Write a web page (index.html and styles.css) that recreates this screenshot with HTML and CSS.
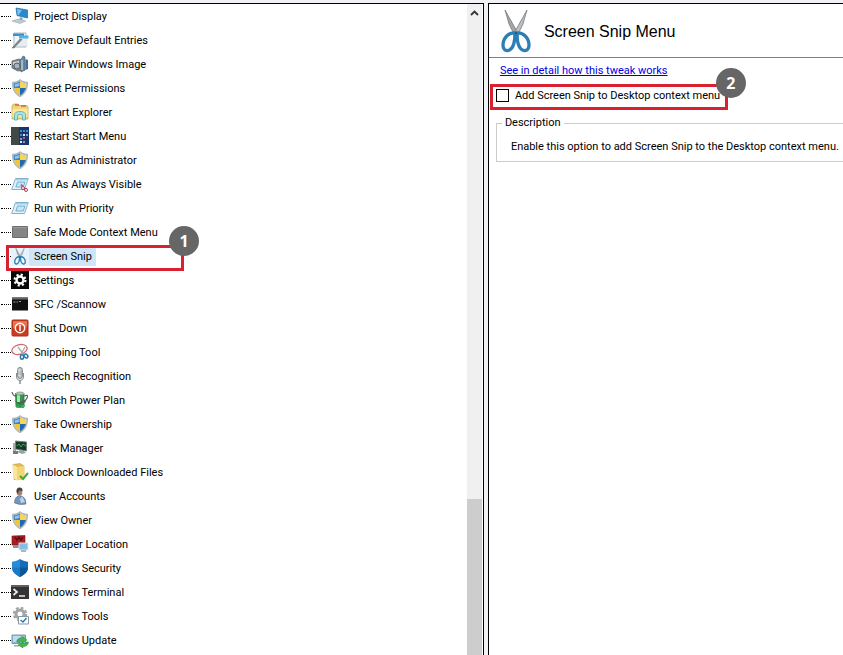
FILE: index.html
```
<!DOCTYPE html>
<html lang="en">
<head>
	<meta charset="UTF-8">
	<title>Screen Snip Menu</title>
	<link rel="stylesheet" href="styles.css">
</head>
<body>
	<svg class="defs" aria-hidden="true">
		<symbol id="shield" viewBox="0 0 18 18">
			<path d="M9 .5C7 2.500 4 3.200 1.500 3.200C1.300 10 3.500 15 9 17.700C14.500 15 16.700 10 16.500 3.200C14 3.200 11 2.500 9 .5Z" fill="#b9c4ca" stroke="#8d9aa2" stroke-width=".6"/>
			<path d="M9 2C7.500 3.600 5 4.300 2.700 4.300C2.600 6.500 2.800 8 3.200 9H9Z" fill="#3583ce"/>
			<path d="M9 2C10.500 3.600 13 4.300 15.300 4.300C15.400 6.500 15.200 8 14.800 9H9Z" fill="#f8d552"/>
			<path d="M3.200 9C4.200 12.500 6.300 15 9 16.500V9Z" fill="#f3c63a"/>
			<path d="M14.800 9C13.800 12.500 11.700 15 9 16.500V9Z" fill="#2469ae"/>
			<path d="M3.700 5.200C5.500 5 7.200 4.500 8.500 3.700V6.700C7 7.400 5.500 7.800 3.900 7.900Z" fill="#8fc3ed"/>
		</symbol>
		<symbol id="run" viewBox="0 0 18 18">
			<path d="M4.500 3.500H17.300L13.500 14.500H.7Z" fill="#e4f3fb" stroke="#7fb2cf"/>
			<path d="M5 4H16.500L16 5.500H4.500Z" fill="#9fd0ea"/>
			<path d="M6.500 7H14L12.300 12H4.800Z" fill="#c5e5f6" stroke="#5d9ec4" stroke-width=".8"/>
		</symbol>
		<symbol id="scissors" viewBox="0 0 30 44">
			<path d="M4 1L18 26L14.500 27Q10 20 8 15Z" fill="#a3a7aa" stroke="#6c7073" stroke-width=".7"/>
			<path d="M26 1L12 26L15.500 27Q20 20 22 15Z" fill="#bcc0c2" stroke="#6c7073" stroke-width=".7"/>
			<path d="M14 24C8 23 2 29 2 36C2 40 4 42 7 41.500C12 40.500 14 33 14 24Z" fill="#fff" fill-opacity=".4" stroke="#2b7fb5" stroke-width="3.300"/>
			<path d="M16 24C22 23 28 29 28 36C28 40 26 42 23 41.500C18 40.500 16 33 16 24Z" fill="#fff" fill-opacity=".4" stroke="#2b7fb5" stroke-width="3.300"/>
			<circle cx="15" cy="24" r="1" fill="#17557e"/>
		</symbol>
	</svg>

	<div class="panes">
		<nav class="tree" aria-label="Tweaks">
			<ul class="items">
				<li><a href="#"><svg class="icon" viewBox="0 0 18 18"><path d="M5 1L16.500 3V11L6 8.500Z" fill="#2689cf" stroke="#1d6ba5" stroke-width=".7"/><path d="M6 2L11 3L7.500 8.200L6.700 8Z" fill="#77c2ef"/><path d="M9 10L12 11L11 14H8Z" fill="#91a8b5"/><path d="M1 14L7 12L15 14L9 16.500Z" fill="#bdccd5" stroke="#8e9fa9" stroke-width=".5"/></svg><span>Project Display</span></a></li>
				<li><a href="#"><svg class="icon" viewBox="0 0 18 18"><path d="M3 2H15V16H3Z" fill="#f3f6f8" stroke="#a8b8c3"/><path d="M2 2.500H13V5H2Z" fill="#3a91c9"/><path d="M8 4.500H17.500V7.500H8Z" fill="#53b3df"/><path d="M8 8H16.500V15H6Z" fill="#e6edf1"/><path d="M1 17L9 8L11 8.500L3 17Z" fill="#84898c" stroke="#575e62" stroke-width=".5"/></svg><span>Remove Default Entries</span></a></li>
				<li><a href="#"><svg class="icon" viewBox="0 0 18 18"><path d="M1 6L8 4L14 6V15L7 16L1 13Z" fill="#7e8b94" stroke="#4f5b64" stroke-width=".7"/><path d="M2 7L8 6V9L2 10Z" fill="#c7d1d7"/><circle cx="6" cy="11" r="3" fill="#a8b4bc" stroke="#55626b"/><path d="M9 6L12 1L14 2V15L10 17Z" fill="#6c899d" stroke="#465a68" stroke-width=".6"/><path d="M14.500 4L17 5V14L14.500 15Z" fill="#3c6f9c"/><path d="M11 5V15" stroke="#dce7ee"/></svg><span>Repair Windows Image</span></a></li>
				<li><a href="#"><svg class="icon"><use href="#shield"/></svg><span>Reset Permissions</span></a></li>
				<li><a href="#"><svg class="icon" viewBox="0 0 18 18"><path d="M1 3L2.500 1H7L8 2.500H16L17 4V16H1Z" fill="#f2d479" stroke="#bda052" stroke-width=".7"/><path d="M4 2H8M10 3H15" stroke="#cc6942" stroke-width="1.500"/><path d="M1.500 6H16.500V14H1.500Z" fill="#fae99e"/><path d="M3.500 17V12Q3.500 8.500 9 8.500T14.500 12V17H11.500V13Q11.500 11.500 9 11.500T6.500 13V17Z" fill="#a7e4e4" stroke="#4aadb2" stroke-width=".8"/></svg><span>Restart Explorer</span></a></li>
				<li><a href="#"><svg class="icon" viewBox="0 0 18 18"><path fill="#414846" d="M0 0H18V18H0Z"/><path fill="#18356b" d="M8 0H18V18H8Z"/><path d="M9 3H11V5H9ZM12 3H14V5H12ZM9 7H11V9H9ZM15 3H17V5H15Z" fill="#438ccb"/><path d="M12 7H14V9H12ZM9 14H11V16H9Z" fill="#dce8f4"/><path d="M12 10H14V12H12Z" fill="#ca4e63"/><path d="M9 11H11V13H9ZM15 7H17V9H15ZM12 14H14V16H12Z" fill="#7d9fcc"/></svg><span>Restart Start Menu</span></a></li>
				<li><a href="#"><svg class="icon"><use href="#shield"/></svg><span>Run as Administrator</span></a></li>
				<li><a href="#"><svg class="icon" viewBox="0 0 18 18"><use href="#run"/><path d="M10 9.500L14 14" stroke="#ad5365" stroke-width="1.600"/><circle cx="12" cy="13" r="1.500" fill="#fff" stroke="#aa3f56"/><circle cx="15" cy="15" r="1.500" fill="#fff" stroke="#aa3f56"/></svg><span>Run As Always Visible</span></a></li>
				<li><a href="#"><svg class="icon"><use href="#run"/></svg><span>Run with Priority</span></a></li>
				<li><a href="#"><svg class="icon" viewBox="0 0 18 18"><path d="M1.500 3.500H16.500V14.500H1.500Z" fill="#858585" stroke="#6d6d6d"/><path d="M2 4H16V5H2Z" fill="#9b9b9b"/></svg><span>Safe Mode Context Menu</span></a></li>
				<li class="selected"><a href="#" aria-current="true"><svg class="icon"><use href="#scissors"/></svg><span>Screen Snip</span></a>
					<div class="mark mark-item"><b class="step">1</b></div></li>
				<li><a href="#"><svg class="icon" viewBox="0 0 18 18"><path fill="#080808" d="M0 0H18V18H0Z"/><circle cx="9" cy="9" r="3.500" fill="none" stroke="#fff" stroke-width="2.400"/><circle cx="9" cy="9" r="5.400" fill="none" stroke="#fff" stroke-width="2.200" stroke-dasharray="2.120"/></svg><span>Settings</span></a></li>
				<li><a href="#"><svg class="icon" viewBox="0 0 18 18"><path d="M1 2.500H17V15.500H1Z" fill="#111"/><path d="M1 2.500H17V4.500H1Z" fill="#686868"/><path d="M2.500 7H4.500M5.500 7H7M8 6.500H10" stroke="#9c9c9c"/></svg><span>SFC /Scannow</span></a></li>
				<li><a href="#"><svg class="icon" viewBox="0 0 18 18"><rect x="1" y="1" width="16" height="16" rx="1" fill="#ca3d20" stroke="#a92f18"/><path d="M2 2H16V8Q8 5 2 9Z" fill="#e37457"/><circle cx="9" cy="9" r="4.700" fill="none" stroke="#fff" stroke-width="1.500"/><path d="M9 6V12" stroke="#fff" stroke-width="1.500"/></svg><span>Shut Down</span></a></li>
				<li><a href="#"><svg class="icon" viewBox="0 0 18 18"><ellipse cx="8.500" cy="6.500" rx="7.800" ry="4.800" transform="rotate(-15 8.500 6.500)" fill="#fffafa" stroke="#cc6870" stroke-width="1.200"/><path d="M7 4L13 12M14 4L10 11" stroke="#a9adb0" stroke-width="1.300"/><ellipse cx="11" cy="14" rx="1.600" ry="2.200" fill="none" stroke="#2878aa" stroke-width="1.500"/><ellipse cx="15" cy="13" rx="1.600" ry="2.200" transform="rotate(-40 15 13)" fill="none" stroke="#2878aa" stroke-width="1.500"/></svg><span>Snipping Tool</span></a></li>
				<li><a href="#"><svg class="icon" viewBox="0 0 18 18"><path d="M5.500 6V10Q5.500 13.500 9 13.500T12.500 10V6" fill="none" stroke="#8b8f91"/><path d="M9 13V17" stroke="#8b8f91" stroke-width="1.500"/><rect x="6.700" y=".5" width="4.600" height="11" rx="2.200" fill="#c6cacb" stroke="#777c7e"/><path d="M8 2V9" stroke="#f3f3f3"/><path d="M7 5H11M7 7H11" stroke="#929799" stroke-width=".6"/></svg><span>Speech Recognition</span></a></li>
				<li><a href="#"><svg class="icon" viewBox="0 0 18 18"><path d="M1 1Q2 6 7 5M13 5Q18 3 16 7T12 10" fill="none" stroke="#505f59" stroke-width="1.200"/><path d="M4.500 2.500H13V16H5Z" fill="#2e9a4d" stroke="#24683b" stroke-width=".7"/><path d="M6 3.500H9V11H6Z" fill="#a4e7a1"/><ellipse cx="9" cy="2.500" rx="4" ry="1.500" fill="#b9c9bc" stroke="#5e7864" stroke-width=".6"/><path d="M3 9.500L8 11.500L13 8.500L15 11L9 14Z" fill="#54615b"/><path d="M5 14L9 16L14 13L13 17H6Z" fill="#38b356"/></svg><span>Switch Power Plan</span></a></li>
				<li><a href="#"><svg class="icon"><use href="#shield"/></svg><span>Take Ownership</span></a></li>
				<li><a href="#"><svg class="icon" viewBox="0 0 18 18"><path d="M2 4H5V12H2Z" fill="#a2afb3"/><path d="M4.500 2L15.500 3V12L4.500 10Z" fill="#173824" stroke="#75837c"/><path d="M5.500 7L8 5L10 8L12 5L15 7" fill="none" stroke="#49a364"/><path d="M9 11L13 12L15 14L11 15L6 13Z" fill="#99a4aa"/><path d="M2 12H7V15H2Z" fill="#6d7c84"/></svg><span>Task Manager</span></a></li>
				<li><a href="#"><svg class="icon" viewBox="0 0 18 18"><path d="M2 1.500L9 .5L13 3V16L3 16.500Z" fill="#e4bd53" stroke="#bd9740" stroke-width=".6"/><path d="M2 1.500L6 4V17.500L2 15Z" fill="#fae59a"/><path d="M6 4L13 3V15L6 17.500Z" fill="#f3d572"/><path d="M9 13L12 16L17 10" fill="none" stroke="#3cad38" stroke-width="2"/></svg><span>Unblock Downloaded Files</span></a></li>
				<li><a href="#"><svg class="icon" viewBox="0 0 18 18"><path d="M3.500 16Q3.500 10 7.500 9H11Q15 11 15 17Q9 18.500 3.500 16Z" fill="#7795b8" stroke="#516f92" stroke-width=".6"/><path d="M8 9L9.500 12L11 9L14 15L10 16Z" fill="#bdd4e7"/><ellipse cx="8.500" cy="5" rx="2.800" ry="3.800" fill="#a67f68"/><path d="M5.500 5Q5 .5 8.500 .5T11.500 4L8 3.500L7 7Z" fill="#48423f"/></svg><span>User Accounts</span></a></li>
				<li><a href="#"><svg class="icon"><use href="#shield"/></svg><span>View Owner</span></a></li>
				<li><a href="#"><svg class="icon" viewBox="0 0 18 18"><path d="M1 1L14 .5V10H1Z" fill="#a91f22" stroke="#791619" stroke-width=".6"/><path d="M4 2L6 5L8 2L10 5L12 2" fill="none" stroke="#4e1016" stroke-width="1.300"/><path d="M2 10H8V13H2Z" fill="#8795a0"/><path d="M8 8H17V15H8Z" fill="#85bfe4" stroke="#dbe5eb"/><path d="M10 15H15V17H10Z" fill="#a8b6bf"/></svg><span>Wallpaper Location</span></a></li>
				<li><a href="#"><svg class="icon" viewBox="0 0 18 18"><path d="M9 0C6 2 3 2.700 1 2.800V8.500C1 13 5 16 9 18Z" fill="#278cd8"/><path d="M9 0C12 2 15 2.700 17 2.800V8.500C17 13 13 16 9 18Z" fill="#146db9"/><path d="M1 8.500H9V18C5 16 1 13 1 8.500Z" fill="#1b78c5"/><path d="M9 8.500H17C17 13 13 16 9 18Z" fill="#0d5698"/></svg><span>Windows Security</span></a></li>
				<li><a href="#"><svg class="icon" viewBox="0 0 18 18"><path d="M0 2H18V16H0Z" fill="#333"/><path d="M0 2H18V4H0Z" fill="#606060"/><path d="M2.500 6L6 9L2.500 12" fill="none" stroke="#eee" stroke-width="1.700"/><path d="M8 13H14" stroke="#eee" stroke-width="1.500"/></svg><span>Windows Terminal</span></a></li>
				<li><a href="#"><svg class="icon" viewBox="0 0 18 18"><circle cx="9" cy="7" r="4" fill="none" stroke="#a3a6a8" stroke-width="3"/><circle cx="9" cy="7" r="6" fill="none" stroke="#a3a6a8" stroke-width="2.500" stroke-dasharray="2.700 2"/><path d="M7.500 9.500H17.500V17H7.500Z" fill="#fff" stroke="#8b99a1"/><path d="M9.500 13L12 15L15.500 11" fill="none" stroke="#2878b8" stroke-width="1.400"/></svg><span>Windows Tools</span></a></li>
				<li><a href="#"><svg class="icon" viewBox="0 0 18 18"><path d="M1 4H14.500V12.500H1Z" fill="#8dbddd" stroke="#8195a3"/><path d="M2 5H10L4 11H2Z" fill="#bcdcf0"/><path d="M3 14H8V15.500H3Z" fill="#9eabaf"/><path d="M6 11Q6 6.500 11 7.500V5.500L16 9L11 12V10Q9 9.500 8.500 12ZM17.500 11Q17 15.500 12 15.500V17L7 14L12 11.500V13.500Q14.500 14 15 11Z" fill="#45b74a" stroke="#288838" stroke-width=".5"/></svg><span>Windows Update</span></a></li>
			</ul>
			<div class="scrollbar">
				<button type="button" class="up" aria-label="Scroll up"><svg viewBox="0 0 9 6"><path d="M1 5L4.500 1.500L8 5" fill="none" stroke="#333" stroke-width="1.800"/></svg></button>
				<div class="thumb"></div>
			</div>
		</nav>

		<main class="detail">
			<header class="head">
				<svg class="logo"><use href="#scissors"/></svg>
				<h1>Screen Snip Menu</h1>
			</header>
			<div class="content">
				<a class="more" href="#">See in detail how this tweak works</a>
				<div class="option">
					<input type="checkbox" id="snip">
					<label for="snip">Add Screen Snip to Desktop context menu</label>
					<div class="mark mark-option"><b class="step">2</b></div>
				</div>
				<fieldset>
					<legend>Description</legend>
					<p>Enable this option to add Screen Snip to the Desktop context menu.</p>
				</fieldset>
			</div>
		</main>
	</div>
</body>
</html>
```
FILE: styles.css
```
* { box-sizing: border-box; }
body { margin: 0; background: #f0f2f5; color: #000; font: 11px/16px Roboto, "Liberation Sans", Arial, sans-serif; }
.defs { position: absolute; width: 0; height: 0; }
.panes { display: grid; grid-template-columns: 57.4% 1fr; column-gap: 4px; height: 100vh; padding-top: 3px; overflow: hidden; }

.tree { display: flex; min-height: 0; background: #fff; border-top: 1px solid #000; border-right: 1px solid #000; }
.items { flex: 1; min-width: 0; margin: 0; padding: 0; list-style: none; }
.items li { position: relative; display: flex; align-items: center; height: 24px; padding-left: 1px; }
.items li::before { content: ""; width: 10px; border-top: 1px dotted #000; }
.items a { display: flex; align-items: center; color: #000; text-decoration: none; white-space: nowrap; }
.items span { padding: 3px 4px 1px 5px; }
.icon { display: block; width: 18px; height: 18px; }
.selected a { background: #e6f3fd; }
.selected span { background: #cfe6f9; }

.scrollbar { display: flex; flex-direction: column; justify-content: space-between; width: 16px; background: #f0f0f0; border-right: 1px solid #fff; }
.up { display: flex; align-items: center; justify-content: center; height: 18px; padding: 0; border: 0; background: none; }
.up svg { width: 9px; height: 6px; }
.thumb { height: 24%; background: #cdcdcd; }

.detail { min-width: 0; background: #fff; border-top: 1px solid #000; border-left: 1px solid #000; }
.head { display: flex; align-items: center; gap: 13px; height: 54px; padding-left: 12px; border-bottom: 1px solid #808080; }
.head h1 { margin: 0; padding-top: 2px; font: 16px/20px "Liberation Sans", Arial, sans-serif; }
.logo { width: 30px; height: 44px; }
.content { padding: 5px 0 0 7px; }
.more { display: block; width: fit-content; margin-left: 4px; color: #0000e0; }
.option { position: relative; display: flex; align-items: center; gap: 6px; height: 26px; margin-top: 3px; }
.option label { padding-top: 2px; }
.option input { appearance: none; width: 13px; height: 13px; margin: 0; border: 1px solid #000; background: #fff; }
.option input:checked { background: #000; box-shadow: inset 0 0 0 2px #fff; }
fieldset { margin: 7px -1px 0 0; padding: 8px 4px 6px 14px; border: 1px solid #ccc; }
legend { padding: 0 3px; margin-left: -9px; }
fieldset p { margin: 0; }

/* red frames with a step number on the corner */
.mark { position: absolute; border: 3px solid #d92231; pointer-events: none; }
.mark-item { left: 6px; top: 1px; width: 178px; height: 26px; z-index: 1; }
.mark-option { left: -6px; top: 2px; width: 238px; height: 26px; }
.step { position: absolute; right: -18px; top: -22px; width: 30px; height: 30px; border-radius: 50%; background: #666; color: #fff;
	font: bold 16px/30px "Open Sans", sans-serif; text-align: center; }
.mark-option .step { top: -19px; right: -21px; }
```
